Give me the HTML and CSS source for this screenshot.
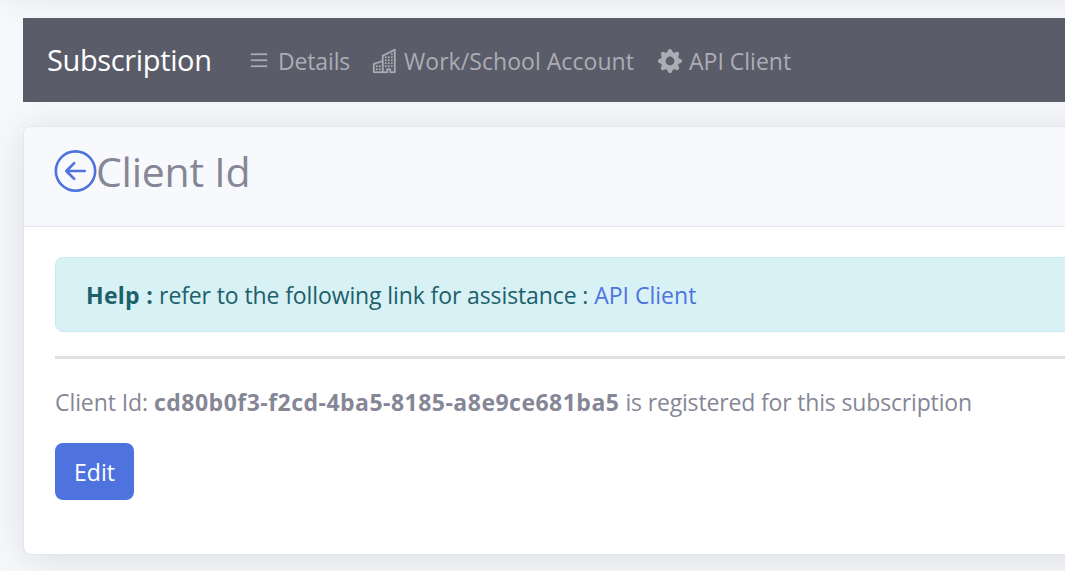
FILE: index.html
```html
<!DOCTYPE html>
<html lang="en">
<head>
<meta charset="utf-8">
<title>Subscription</title>
<link rel="stylesheet" href="styles.css">
</head>
<body>
<div class="topbar-shadow"></div>
<main class="page">
  <nav class="navbar">
    <a class="brand">Subscription</a>
    <a class="nav-link details">
      <svg class="icon outlined" viewBox="0 0 16 16" fill="currentColor"><path fill-rule="evenodd" d="M2.500 11.500A.5.5 0 0 1 3 11h10a.5.5 0 0 1 0 1H3a.5.5 0 0 1-.5-.5zm0-4A.5.5 0 0 1 3 7h10a.5.5 0 0 1 0 1H3a.5.5 0 0 1-.5-.5zm0-4A.5.5 0 0 1 3 3h10a.5.5 0 0 1 0 1H3a.5.5 0 0 1-.5-.5z"/></svg>
      <span>Details</span>
    </a>
    <a class="nav-link account">
      <svg class="icon outlined" viewBox="0 0 16 16" fill="currentColor"><path fill-rule="evenodd" d="M14.763.075A.5.5 0 0 1 15 .5v15a.5.5 0 0 1-.5.5h-3a.5.5 0 0 1-.5-.5V14h-1v1.500a.5.5 0 0 1-.5.5h-9a.5.5 0 0 1-.5-.5V10a.5.5 0 0 1 .342-.474L6 7.640V4.500a.5.5 0 0 1 .276-.447l8-4a.5.5 0 0 1 .487.022zM6 8.694L1 10.360V15h5V8.694zM7 15h2v-1.500a.5.5 0 0 1 .5-.5h2a.5.5 0 0 1 .5.5V15h2V1.309l-7 3.500V15z"/><path d="M2 11h1v1H2v-1zm2 0h1v1H4v-1zm-2 2h1v1H2v-1zm2 0h1v1H4v-1zm4-4h1v1H8V9zm2 0h1v1h-1V9zm-2 2h1v1H8v-1zm2 0h1v1h-1v-1zm2-2h1v1h-1V9zm0 2h1v1h-1v-1zM8 7h1v1H8V7zm2 0h1v1h-1V7zm2 0h1v1h-1V7zM8 5h1v1H8V5zm2 0h1v1h-1V5zm2 0h1v1h-1V5zm0-2h1v1h-1V3z"/></svg>
      <span>Work/School Account</span>
    </a>
    <a class="nav-link client">
      <svg class="icon" viewBox="0 0 16 16" fill="currentColor"><path d="M9.405 1.050c-.413-1.400-2.397-1.400-2.810 0l-.1.340a1.464 1.464 0 0 1-2.105.872l-.310-.170c-1.283-.698-2.686.705-1.987 1.987l.169.311c.446.820.023 1.841-.872 2.105l-.340.100c-1.400.413-1.400 2.397 0 2.810l.340.100a1.464 1.464 0 0 1 .872 2.105l-.170.310c-.698 1.283.705 2.686 1.987 1.987l.311-.169a1.464 1.464 0 0 1 2.105.872l.100.340c.413 1.400 2.397 1.400 2.810 0l.100-.340a1.464 1.464 0 0 1 2.105-.872l.310.170c1.283.698 2.686-.705 1.987-1.987l-.169-.311a1.464 1.464 0 0 1 .872-2.105l.340-.100c1.400-.413 1.400-2.397 0-2.810l-.340-.100a1.464 1.464 0 0 1-.872-2.105l.170-.310c.698-1.283-.705-2.686-1.987-1.987l-.311.169a1.464 1.464 0 0 1-2.105-.872l-.100-.340zM8 10.930a2.929 2.929 0 1 1 0-5.860 2.929 2.929 0 0 1 0 5.858z"/></svg>
      <span>API Client</span>
    </a>
  </nav>
  <section class="card">
    <header class="card-header">
      <svg class="back" viewBox="0 0 16 16" fill="currentColor"><path fill-rule="evenodd" d="M1 8a7 7 0 1 0 14 0A7 7 0 0 0 1 8zm15 0A8 8 0 1 1 0 8a8 8 0 0 1 16 0zm-4.500-.5a.5.5 0 0 1 0 1H5.707l2.147 2.146a.5.5 0 0 1-.708.708l-3-3a.5.5 0 0 1 0-.708l3-3a.5.5 0 1 1 .708.708L5.707 7.500H11.500z"/></svg>
      <h1 class="title">Client Id</h1>
    </header>
    <div class="card-body">
      <div class="alert"><strong class="help">Help :</strong> <span class="refer">refer to the following link for assistance :</span> <a class="link">API Client</a></div>
      <hr class="rule">
      <p class="status"><span class="label">Client Id:</span> <strong class="guid">cd80b0f3-f2cd-4ba5-8185-a8e9ce681ba5</strong> <span class="registered">is registered for this subscription</span></p>
      <button class="btn">Edit</button>
    </div>
  </section>
</main>
</body>
</html>
```
FILE: styles.css
```css
* { box-sizing: border-box; }
html, body { margin: 0; height: 100%; overflow: hidden; }
body {
  background: #f8f9fc;
  color: #858796;
  font-family: "Open Sans", "Noto Sans", sans-serif;
  font-size: 23px;
  line-height: 36px;
  white-space: nowrap;
}
/* Shadow cast by the bar that sits above the visible page */
.topbar-shadow {
  position: absolute;
  top: -75px;
  left: 0;
  right: -60px;
  height: 63px;
  box-shadow: 0 3.6px 42px rgba(58, 59, 69, .15);
}
.page { width: 1130px; padding: 18px 0 0 23px; }
.navbar {
  position: relative;
  z-index: 1;
  display: flex;
  align-items: center;
  height: 84px;
  padding-left: 24px;
  background: #5a5c69;
  color: #acadb4;
}
.brand { width: 201px; color: #fff; font-size: 29px; letter-spacing: -.36px; }
.nav-link { display: flex; align-items: center; }
.nav-link span { padding-top: 2px; }
.icon { width: 24px; height: 24px; flex: none; margin: 1px 7px 0 0; overflow: visible; }
.outlined { stroke: currentColor; stroke-width: .18; }
.details { width: 125px; }
.details .icon { margin: 1px 7px 0 -1px; }
.details span { letter-spacing: -.15px; }
.account { width: 285px; }
.account span { letter-spacing: .05px; }
.card {
  height: 429px;
  margin-top: 24px;
  background: #fff;
  border: 1px solid #e3e6f0;
  border-radius: 8px;
  box-shadow: 0 3.6px 42px rgba(58, 59, 69, .15);
}
.card-header {
  display: flex;
  align-items: flex-start;
  height: 100px;
  padding: 23px 30px 0;
  background: #f8f9fc;
  border-bottom: 1px solid #e3e6f0;
  border-radius: 7px 7px 0 0;
}
.back { width: 43px; height: 42px; color: #4e73df; flex: none; }
.title { margin: 0 0 0 -1px; font-size: 41px; font-weight: 400; line-height: 42px; letter-spacing: -.25px; }
.card-body { padding: 30px 31px; }
.alert {
  height: 75px;
  padding: 19px 30px;
  background: #d7f1f5;
  border: 1px solid #c7ebf1;
  border-radius: 8px;
  color: #1c606a;
}
.help { letter-spacing: .3px; }
.refer { letter-spacing: -.11px; }
.link { color: #4e73df; }
.rule { height: 3px; margin: 24px 0; border: 0; background: #e0e0e4; }
.status { margin: 0 0 22px; line-height: 38px; }
.label { letter-spacing: -.08px; }
.guid { letter-spacing: .48px; }
.registered { letter-spacing: -.16px; }
.btn {
  display: block;
  width: 79px;
  height: 57px;
  padding: 0;
  border: 0;
  border-radius: 8px;
  background: #4e73df;
  color: #fff;
  font: inherit;
}
```
